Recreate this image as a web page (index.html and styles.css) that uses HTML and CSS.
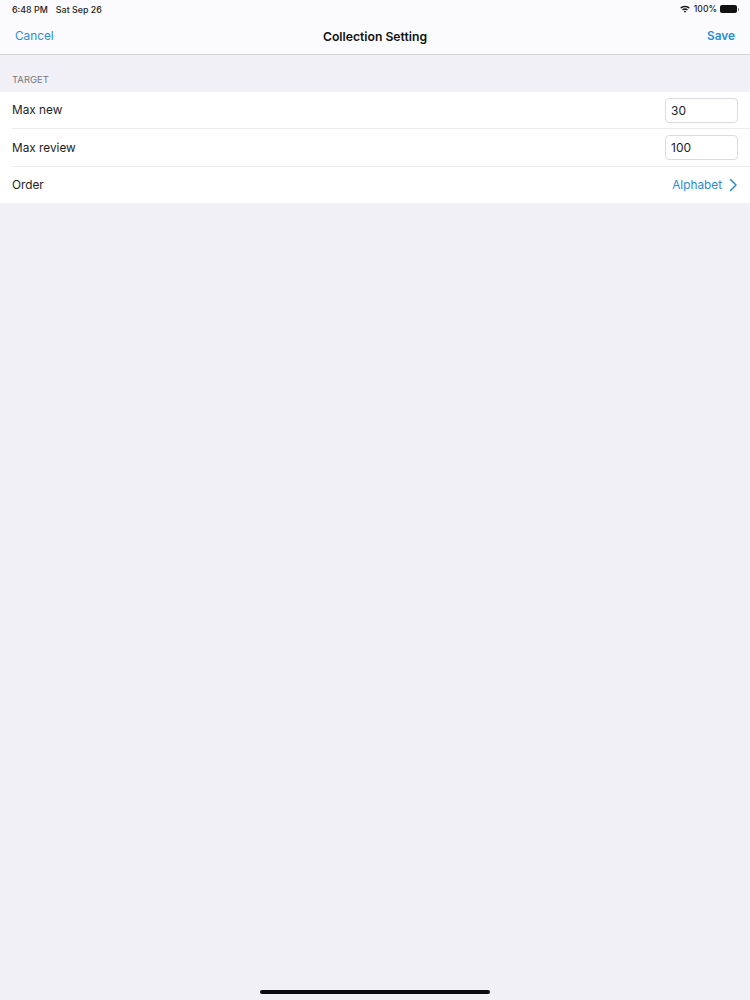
FILE: index.html
```html
<!DOCTYPE html>
<html lang="en">
<head>
  <meta charset="UTF-8" />
  <meta name="viewport" content="width=device-width, initial-scale=1.0"/>
  <title>Collection Setting</title>
  <link rel="stylesheet" href="styles.css">
</head>
<body>
  <div class="topbar">
    <div class="status">
      <div class="status-left">
        <span>6:48 PM</span>
        <span>Sat Sep 26</span>
      </div>
      <div class="status-right">
        <svg class="wifi" width="10" height="8" viewBox="1 1 20 15">
          <path d="M11 2.2c3.6 0 6.9 1.4 9.4 3.7l-1.7 1.9C16.600 5.900 14 4.800 11 4.800S5.400 5.900 3.300 7.800L1.600 5.900C4.100 3.600 7.400 2.200 11 2.200z" fill="#111"/>
          <path d="M11 7.200c2.200 0 4.200.8 5.800 2.200l-1.700 1.900C14 10.300 12.600 9.800 11 9.800s-3 .5-4.100 1.500L5.200 9.400C6.800 8 8.800 7.200 11 7.200z" fill="#111"/>
          <path d="M11 12c1 0 1.900.4 2.500 1L11 15.800 8.500 13c.6-.6 1.500-1 2.500-1z" fill="#111"/>
        </svg>
        <span class="percent">100%</span>
        <div class="battery"></div>
        <div class="battery-nub"></div>
      </div>
    </div>
    <div class="nav">
      <a class="nav-btn" href="#">Cancel</a>
      <div class="nav-title">Collection Setting</div>
      <a class="nav-btn nav-save" href="#">Save</a>
    </div>
  </div>

  <div class="section-title">TARGET</div>
  <div class="list">
    <div class="row">
      <div class="row-inner first">
        <span>Max new</span>
        <input class="num" type="text" value="30">
      </div>
    </div>
    <div class="row">
      <div class="row-inner">
        <span>Max review</span>
        <input class="num" type="text" value="100">
      </div>
    </div>
    <div class="row">
      <div class="row-inner last">
        <span>Order</span>
        <a class="row-value" href="#">
          Alphabet
          <svg width="9" height="14" viewBox="0 0 9 14">
            <path d="M1.500 1.500L7 7l-5.500 5.500" fill="none" stroke="#2a8bd6" stroke-width="1.500" stroke-linecap="round" stroke-linejoin="round"/>
          </svg>
        </a>
      </div>
    </div>
  </div>

  <div class="home-area">
    <div class="home-bar"></div>
  </div>
</body>
</html>
```

FILE: styles.css
```css
* { box-sizing: border-box; }
body {
  font-family: Inter, "Liberation Sans", sans-serif;
  background-color: #f1f0f6;
  color: #1c1c1e;
  margin: 0;
  height: 1000px;
  display: flex;
  flex-direction: column;
  overflow: hidden;
}
.topbar {
  background-color: #fbfbfd;
  border-bottom: 1px solid #d2d2d6;
  height: 55px;
}
.status {
  display: flex;
  justify-content: space-between;
  align-items: center;
  height: 18px;
  padding: 0 11px 0 12px;
  font-size: 8.900px;
  font-weight: 500;
  color: #222;
}
.status-left {
  display: flex;
  gap: 8px;
}
.status-right {
  display: flex;
  align-items: center;
  gap: 2px;
}
.percent {
  font-size: 8.600px;
  margin-left: 2px;
}
.battery {
  width: 17px;
  height: 8px;
  margin-left: 1px;
  background-color: #111;
  border-radius: 2px;
}
.battery-nub {
  width: 1px;
  height: 3px;
  margin-left: -1px;
  background-color: #888;
}
.nav {
  display: flex;
  justify-content: space-between;
  align-items: center;
  height: 36px;
  padding: 0 15px;
}
.nav-btn {
  width: 80px;
  font-size: 11.800px;
  color: #2a8bd6;
  text-decoration: none;
}
.nav-save {
  text-align: right;
  font-weight: 600;
}
.nav-title {
  font-size: 12.200px;
  font-weight: 600;
  color: #111;
}
.section-title {
  height: 37px;
  padding: 19px 12px 0;
  font-size: 9.500px;
  color: #77777c;
}
.list {
  background-color: white;
}
.row {
  padding-left: 12px;
  font-size: 11.800px;
}
.row-inner {
  display: flex;
  justify-content: space-between;
  align-items: center;
  height: 38px;
  padding-right: 12px;
  border-bottom: 1px solid #ececee;
}
.row-inner.first {
  height: 37px;
}
.row-inner.last {
  height: 36px;
  border-bottom: none;
}
.num {
  width: 73px;
  height: 25px;
  padding: 0 5px;
  font-family: inherit;
  font-size: 12px;
  color: #1c1c1e;
  border: 1px solid #dcdce0;
  border-radius: 4px;
}
.row-value {
  display: flex;
  align-items: center;
  gap: 7px;
  color: #2a8bd6;
  text-decoration: none;
}
.home-area {
  margin-top: auto;
  height: 10px;
  display: flex;
  justify-content: center;
}
.home-bar {
  width: 230px;
  height: 4px;
  background-color: #0c0c10;
  border-radius: 2px;
}
```
